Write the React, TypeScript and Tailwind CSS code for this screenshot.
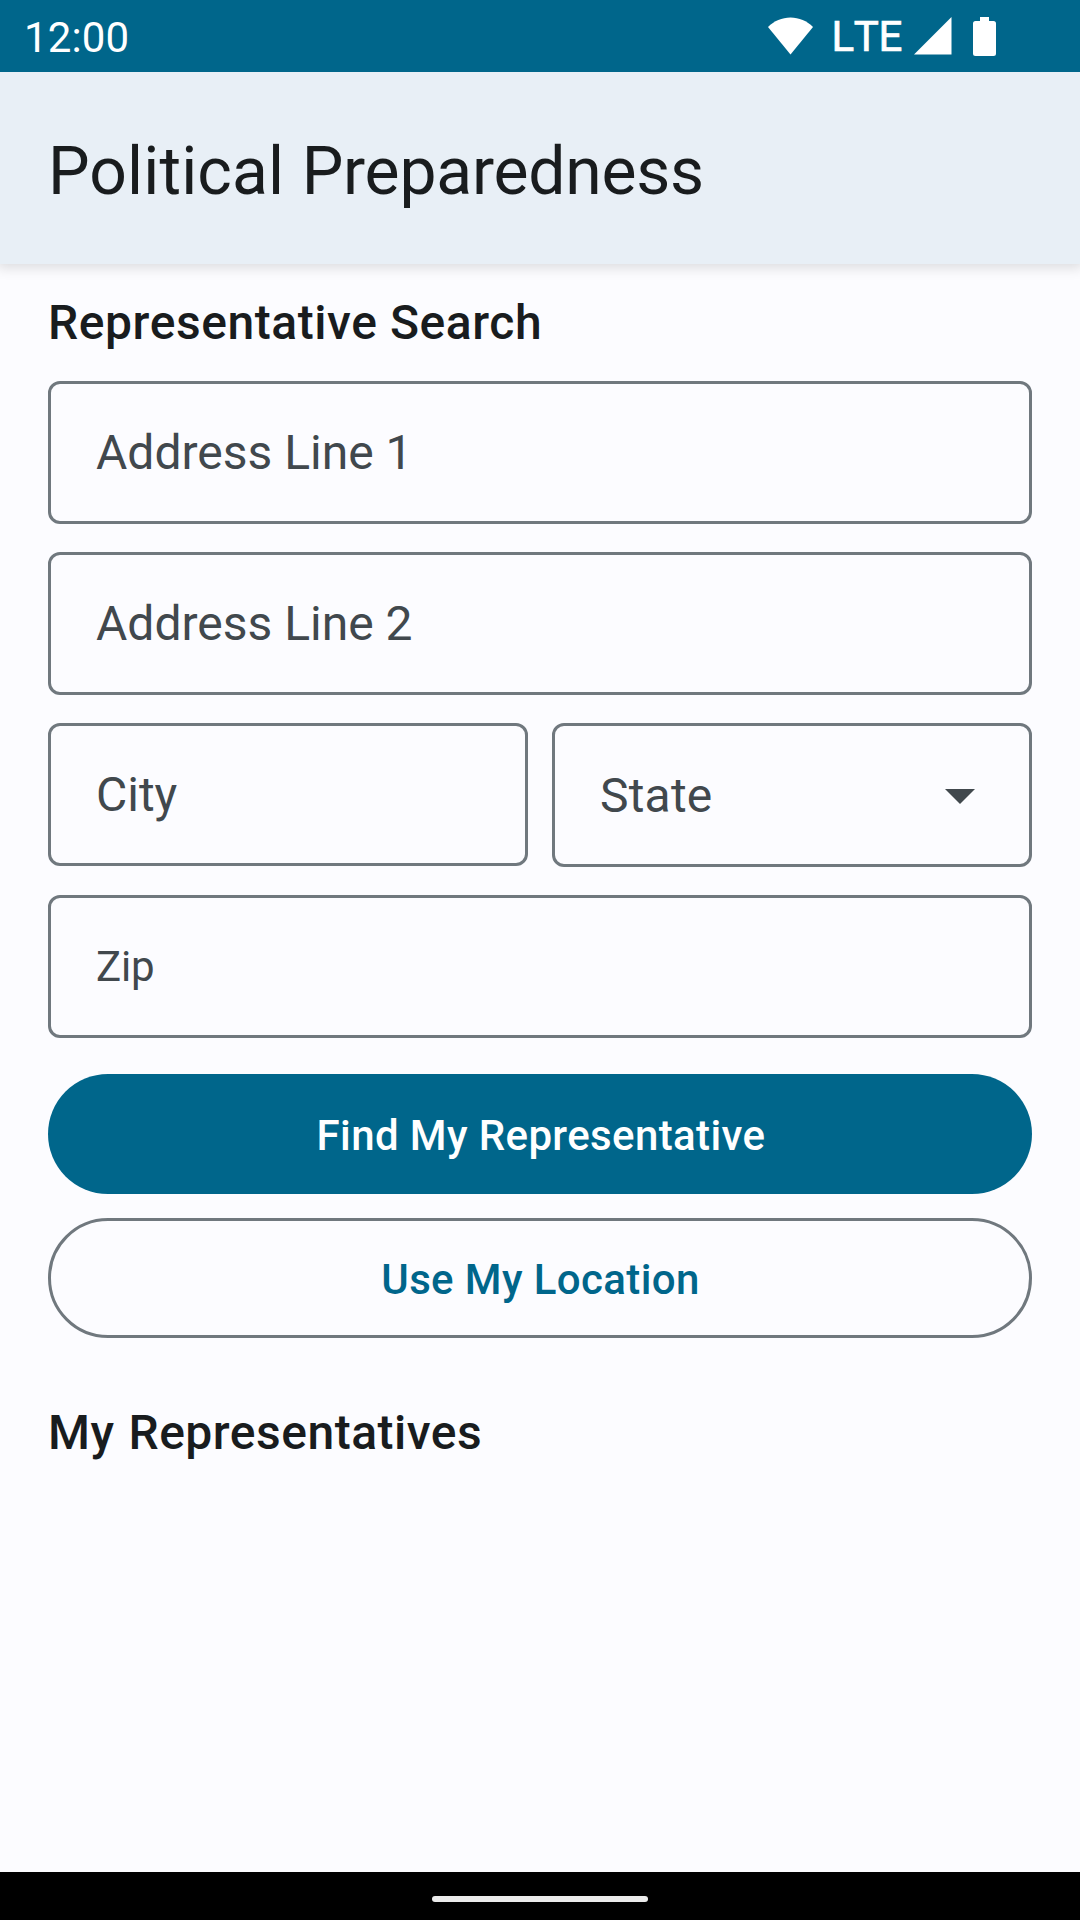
import React from "react";

function StatusBar() {
  return (
    <header className="relative z-10 flex h-[72px] shrink-0 items-center justify-between bg-[#00668b] pr-[84px] pl-6 text-[42px] text-white">
      <span className="pt-[3px] leading-none tracking-[0.15px]">12:00</span>
      <div className="flex items-center">
        <svg className="h-[38px] w-[45px]" viewBox="0 0 45 38" fill="currentColor">
          <path d="M22.5 37.5 0 10C6 4 14 .5 22.5 .5S39 4 45 10Z" />
        </svg>
        <span className="ml-[18px] pt-px leading-none tracking-[-0.35px] [font-kerning:none] [-webkit-text-stroke:0.7px_white]">LTE</span>
        <svg className="ml-[12px] h-[38px] w-[38px]" viewBox="0 0 38 38" fill="currentColor">
          <path d="M0 37.5H37.5V0Z" />
        </svg>
        <svg className="ml-[21px] h-[39px] w-[23px]" viewBox="0 0 23 39" fill="currentColor">
          <path d="M7 0h9v4h4.500q2.500 0 2.500 2.500v30q0 2.500-2.500 2.500h-18Q0 39 0 36.500v-30Q0 4 2.500 4H7Z" />
        </svg>
      </div>
    </header>
  );
}

function Field({ label, small = false }: { label: string; small?: boolean }) {
  return (
    <div className="flex h-[143px] items-center rounded-[12px] border-3 border-[#70787e] px-[45px] text-[#41484d]">
      <span className={small ? "text-[42px] leading-none tracking-[-0.2px]" : "text-[48px] leading-none"}>{label}</span>
    </div>
  );
}

function SelectField({ label }: { label: string }) {
  return (
    <div className="flex h-[144px] items-center justify-between rounded-[12px] border-3 border-[#70787e] pr-[54px] pl-[45px] text-[#41484d]">
      <span className="pt-px text-[48px] leading-none tracking-[0.2px]">{label}</span>
      <svg className="mt-[3px] h-[15px] w-[30px]" viewBox="0 0 30 15" fill="currentColor">
        <path d="M0 0H30L15 15Z" />
      </svg>
    </div>
  );
}

export default function App() {
  return (
    <div className="flex h-[1920px] w-[1080px] flex-col overflow-hidden bg-[#fcfcff] font-['Roboto',sans-serif] text-[#191c1e]">
      <StatusBar />
      <div className="flex h-[192px] shrink-0 items-center bg-[#e8eff6] px-12 pt-[8px] shadow-[0_1px_12px_3px_rgba(0,0,0,0.13)]">
        <h1 className="text-[66px] leading-none">
          <span className="tracking-[0.12px]">Political </span>
          <span className="ml-px tracking-[-0.22px]">Preparedness</span>
        </h1>
      </div>
      <main className="flex grow flex-col px-12 pt-[27px]">
        <h2 className="h-[64px] text-[48px] leading-[64px] font-medium tracking-[0.56px]">Representative Search</h2>
        <form className="mt-[26px] flex flex-col gap-7">
          <Field label="Address Line 1" />
          <Field label="Address Line 2" />
          <div className="grid grid-cols-2 items-start gap-6">
            <Field label="City" />
            <SelectField label="State" />
          </div>
          <Field label="Zip" small />
        </form>
        <div className="mt-9 flex flex-col gap-6 text-[42px] leading-none font-medium tracking-[0.38px]">
          <button className="h-[120px] rounded-full bg-[#00668b] pt-[3px] pl-[2px] text-white">Find My Representative</button>
          <button className="h-[120px] rounded-full border-3 border-[#70787e] pt-[3px] pl-px text-[#00668b]">Use My Location</button>
        </div>
        <h2 className="mt-[63px] h-[64px] text-[48px] leading-[64px] font-medium tracking-[0.5px] [word-spacing:1.5px]">My Representatives</h2>
      </main>
      <footer className="flex h-12 shrink-0 items-center justify-center bg-black pt-[6px]">
        <div className="h-[6px] w-[216px] rounded-full bg-[#ebebeb]" />
      </footer>
    </div>
  );
}
